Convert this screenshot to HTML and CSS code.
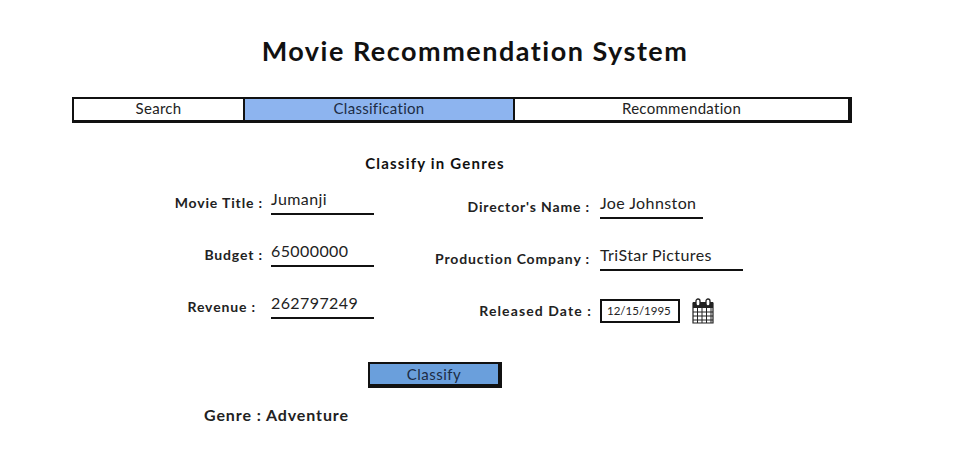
FILE: index.html
```html
<!DOCTYPE html>
<html>
<head>
    <meta charset="UTF-8">
    <meta name="viewport" content="width=device-width, initial-scale=1.0">
    <title>Movie Recommendation System</title>
    <link rel="stylesheet" href="styles.css">
</head>
<body>

<h1 class="title">Movie Recommendation System</h1>

<div class="tabs">
    <div class="tab tab-search">Search</div>
    <div class="tab tab-class active">Classification</div>
    <div class="tab tab-rec">Recommendation</div>
</div>

<h2 class="form-title">Classify in Genres</h2>

<div class="form">
    <div class="col col-left">
        <div class="field">
            <label class="label">Movie Title :</label>
            <div class="value">Jumanji</div>
        </div>
        <div class="field">
            <label class="label">Budget :</label>
            <div class="value">65000000</div>
        </div>
        <div class="field">
            <label class="label label-revenue">Revenue :</label>
            <div class="value">262797249</div>
        </div>
    </div>
    <div class="col col-right">
        <div class="field">
            <label class="label">Director's Name :</label>
            <div class="value value-director">Joe Johnston</div>
        </div>
        <div class="field">
            <label class="label">Production Company :</label>
            <div class="value value-company">TriStar Pictures</div>
        </div>
        <div class="field">
            <label class="label label-date">Released Date :</label>
            <div class="date">12/15/1995</div>
            <svg class="calendar" width="24" height="26" viewBox="0 0 24 26">
                <path d="M2 5h20v20H2z" fill="#fff" stroke="#222" stroke-width="1.2"/>
                <path d="M2 4h20v6H2z" fill="#222"/>
                <path d="M2 14h20M2 18h20M2 22h20M6.500 10v15M11 10v15M15.500 10v15M20 10v15" fill="none" stroke="#222" stroke-width="1"/>
                <rect x="5" y="1" width="4" height="7" rx="2" fill="#fff" stroke="#222" stroke-width="1.300"/>
                <rect x="15" y="1" width="4" height="7" rx="2" fill="#fff" stroke="#222" stroke-width="1.300"/>
            </svg>
        </div>
    </div>
</div>

<button class="classify">Classify</button>

<div class="genre">Genre : Adventure</div>

</body>
</html>
```

FILE: styles.css
```css
body {
    font-family: 'Lato', 'Liberation Sans', sans-serif;
    margin: 0;
    padding: 0;
    background: #fff;
    color: #111;
    overflow: hidden;
}
.title {
    margin: 0;
    padding-top: 34px;
    width: 950px;
    height: 97px;
    box-sizing: border-box;
    text-align: center;
    font-size: 27px;
    line-height: 34px;
    font-weight: 700;
    letter-spacing: 1.5px;
}
.tabs {
    display: flex;
    box-sizing: border-box;
    margin-left: 72px;
    width: 780px;
    height: 26px;
    border: 2px solid #111;
    border-width: 2px 4px 3px 2px;
}
.tab {
    box-sizing: border-box;
    text-align: center;
    font-size: 15px;
    line-height: 19px;
    letter-spacing: 0.3px;
    color: #222;
}
.tab-search {
    width: 171px;
    border-right: 2px solid #111;
}
.tab-class {
    width: 270px;
    border-right: 2px solid #111;
}
.tab-rec {
    flex: 1;
}
.active {
    background: #8db4ef;
    color: #1c2c44;
}
.form-title {
    margin: 31px 0 0 0;
    width: 870px;
    text-align: center;
    font-size: 15px;
    line-height: 19px;
    font-weight: 700;
    letter-spacing: 1.2px;
}
.form {
    display: flex;
}
.col-left {
    width: 374px;
}
.col-right {
    margin-top: 4px;
}
.field {
    display: flex;
    align-items: flex-end;
    height: 40px;
    margin-bottom: 12px;
}
.label {
    box-sizing: border-box;
    text-align: right;
    font-size: 14px;
    line-height: 18px;
    font-weight: 700;
    letter-spacing: 0.85px;
    color: #222;
    padding-bottom: 1px;
    white-space: nowrap;
}
.col-left .label {
    width: 263px;
    margin-right: 8px;
}
.col-left .label-revenue {
    padding-right: 7px;
}
.col-right .label {
    width: 216px;
    margin-right: 10px;
}
.value {
    box-sizing: border-box;
    width: 103px;
    height: 27px;
    margin-bottom: -2px;
    padding-top: 1px;
    border-bottom: 2px solid #111;
    font-size: 16px;
    line-height: 20px;
    letter-spacing: 0.4px;
    color: #222;
}
.value-company {
    width: 143px;
}
.col-right .label-date {
    width: 218px;
    margin-right: 8px;
    padding-bottom: 1px;
    letter-spacing: 1.1px;
}
.date {
    box-sizing: border-box;
    width: 80px;
    height: 24px;
    border: 2px solid #111;
    font-size: 11.5px;
    line-height: 20px;
    padding-left: 5px;
    color: #222;
    margin-bottom: -2px;
}
.calendar {
    margin-left: 11px;
    margin-bottom: -3px;
}
.classify {
    display: block;
    box-sizing: border-box;
    margin: 29px 0 0 368px;
    width: 134px;
    height: 26px;
    padding: 0;
    background: #6a9fdc;
    border: 2px solid #111;
    border-width: 2px 4px 4px 2px;
    border-radius: 0;
    font-family: inherit;
    font-size: 15px;
    letter-spacing: 0.5px;
    color: #1c2c44;
}
.genre {
    margin: 17px 0 0 204px;
    font-size: 16px;
    line-height: 20px;
    font-weight: 700;
    letter-spacing: 0.9px;
    color: #222;
}
```
